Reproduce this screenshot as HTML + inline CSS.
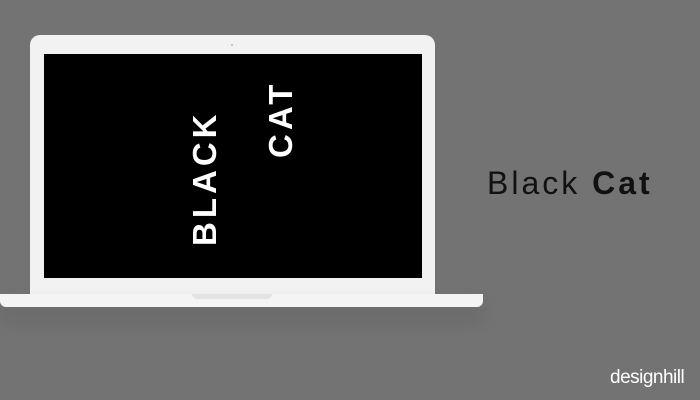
<!DOCTYPE html>
<html><head><style>
body{margin:0;width:700px;height:400px;background:#737373;position:relative;overflow:hidden;font-family:"Liberation Sans",sans-serif}
.lid{position:absolute;left:30px;top:35px;width:405px;height:262px;background:#f2f2f2;border-radius:10px 10px 0 0}
.cam{position:absolute;left:231px;top:44px;width:2px;height:2px;background:#bbb;border-radius:50%}
.scr{position:absolute;left:44px;top:54px;width:378px;height:224px;background:#000}
.base{position:absolute;left:0;top:294px;width:483px;height:13px;background:#f4f4f4;border-radius:0 0 6px 6px;box-shadow:0 12px 20px rgba(0,0,0,.12)}
.notch{position:absolute;left:192px;top:294px;width:80px;height:5px;background:#e4e4e4;border-radius:0 0 5px 5px}
.v{position:absolute;color:#fff;font-weight:900;font-size:33px;letter-spacing:4px;transform:rotate(-90deg);transform-origin:left top;white-space:nowrap;line-height:1}
.t{position:absolute;left:487px;top:165px;font-size:32px;color:#111;letter-spacing:3px}
.d{position:absolute;left:610px;top:367px;font-size:19px;color:#fff;letter-spacing:-0.5px}
</style></head><body>
<div class="lid"></div><div class="cam"></div><div class="scr"></div>
<div class="v" style="left:188px;top:246px">BLACK</div>
<div class="v" style="left:264px;top:158px">CAT</div>
<div class="base"></div><div class="notch"></div>
<div class="t">Black <b>Cat</b></div>
<div class="d">designhill</div>
</body></html>
